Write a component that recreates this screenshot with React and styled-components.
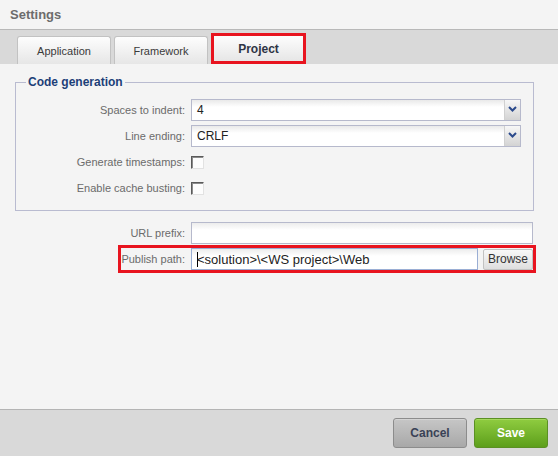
import React from "react";
import styled, { createGlobalStyle } from "styled-components";

const Global = createGlobalStyle`
  html, body { margin: 0; padding: 0; background: #f4f4f4; }
  * { box-sizing: border-box; }
`;

const Window = styled.div`
  width: 558px;
  height: 456px;
  display: flex;
  flex-direction: column;
  font-family: "Liberation Sans", Arial, sans-serif;
  background: #f4f4f4;
  overflow: hidden;
`;

const Header = styled.div`
  height: 30px;
  flex: none;
  display: flex;
  align-items: center;
  padding: 0 0 1px 10px;
  border-bottom: 1px solid #b8b8b8;
  font-size: 13px;
  font-weight: bold;
  color: #6c6c6c;
`;

const TabStrip = styled.div`
  height: 34px;
  flex: none;
  display: flex;
  align-items: flex-end;
  gap: 3px;
  padding-left: 17px;
  background: #d9d9d9;
`;

const Tab = styled.div`
  width: ${(p) => (p.$active ? 95 : 94)}px;
  height: ${(p) => (p.$active ? 31 : 28)}px;
  display: flex;
  align-items: center;
  justify-content: center;
  border: ${(p) => (p.$active ? "3px solid #e8141f" : "1px solid #c2c2c2")};
  border-bottom: ${(p) => (p.$active ? "3px solid #e8141f" : "none")};
  border-radius: ${(p) => (p.$active ? "0" : "3px 3px 0 0")};
  background: linear-gradient(#fdfdfd, #e6e6e6);
  font-size: ${(p) => (p.$active ? 12 : 11)}px;
  font-weight: ${(p) => (p.$active ? "bold" : "normal")};
  color: ${(p) => (p.$active ? "#2e3444" : "#3a3a3a")};
  padding-top: ${(p) => (p.$active ? 0 : 1)}px;
`;

const Body = styled.div`
  flex: 1;
  display: flex;
  flex-direction: column;
  padding: 11px 25px 0 15px;
  background: #f4f4f4;
`;

const Group = styled.fieldset`
  margin: 0;
  padding: 10px 12px 11px 0;
  border: 1px solid #b9bbd0;
  display: flex;
  flex-direction: column;
  gap: 4px;
`;

const Legend = styled.legend`
  margin-left: 10px;
  padding: 0 2px;
  font-size: 12px;
  line-height: 14px;
  font-weight: bold;
  color: #1d3f78;
`;

const FieldRow = styled.div`
  height: 22px;
  display: flex;
  align-items: center;
  gap: 6px;
`;

const FieldLabel = styled.label`
  width: 169px;
  flex: none;
  text-align: right;
  font-size: 11px;
  color: #6b6b6b;
`;

const Label = styled.label`
  font-size: 11px;
  color: #6b6b6b;
  white-space: nowrap;
`;

const SelectBox = styled.div`
  width: 330px;
  height: 22px;
  display: flex;
  border: 1px solid #b6b9cc;
  background: linear-gradient(#e9e9e9 0, #ffffff 7px);
`;

const SelectValue = styled.div`
  flex: 1;
  display: flex;
  align-items: center;
  padding-left: 5px;
  font-size: 12px;
  color: #222;
`;

const SelectArrow = styled.div`
  width: 16px;
  flex: none;
  display: flex;
  align-items: center;
  justify-content: center;
  padding-bottom: 3px;
  border-left: 1px solid #d0d0d0;
  background: linear-gradient(#f7f7f7, #d3d3d3);
`;

const Check = styled.div`
  width: 13px;
  height: 13px;
  border: 1px solid;
  border-color: #5a5a5a #e2e2e2 #e2e2e2 #5a5a5a;
  box-shadow: inset 1px 1px 0 #8c8c8c;
  background: #fdfdfd;
`;

const Row = styled.div`
  height: 22px;
  display: flex;
  justify-content: flex-end;
  align-items: center;
  gap: 6px;
  margin-top: ${(p) => p.$top}px;
`;

const Highlight = styled.div`
  display: flex;
  align-items: center;
  height: 22px;
  outline: 3px solid #e8141f;
`;

const TextBox = styled.div`
  width: ${(p) => p.$w}px;
  height: 22px;
  display: flex;
  align-items: center;
  padding-left: 5px;
  border: 1px solid ${(p) => (p.$focus ? "#9aaed4" : "#b6b9cc")};
  background: linear-gradient(#ececec 0, #ffffff 7px);
  font-size: 13px;
  color: #222;
  white-space: nowrap;
  margin-left: ${(p) => p.$ml || 0}px;
`;

const Caret = styled.span`
  display: inline-block;
  width: 1px;
  height: 15px;
  background: #000;
  margin-right: -1px;
`;

const BrowseButton = styled.button`
  width: 50px;
  height: 21px;
  margin-left: 5px;
  padding: 0;
  border: 1px solid #c2c2c2;
  border-radius: 2px;
  background: linear-gradient(#f8f8f8, #dedede);
  font-family: "Liberation Sans", Arial, sans-serif;
  font-size: 12px;
  color: #333;
`;

const Footer = styled.div`
  height: 47px;
  flex: none;
  display: flex;
  justify-content: flex-end;
  align-items: center;
  gap: 7px;
  padding: 0 10px 1px 0;
  border-top: 1px solid #b4b4b4;
  background: #d9d9d9;
`;

const ActionButton = styled.button`
  width: 74px;
  height: 30px;
  padding: 0;
  border-radius: 3px;
  font-family: "Liberation Sans", Arial, sans-serif;
  font-size: 12px;
  font-weight: bold;
  border: 1px solid ${(p) => (p.$primary ? "#5b9024" : "#8c8c8c")};
  background: ${(p) =>
    p.$primary
      ? "linear-gradient(#8fcc40, #5d9f1b)"
      : "linear-gradient(#c6c6c6, #a8a8a8)"};
  color: ${(p) => (p.$primary ? "#ffffff" : "#3a4256")};
  box-shadow: inset 0 1px 0 ${(p) => (p.$primary ? "#a6d85e" : "#d4d4d4")};
`;

const Chevron = () => (
  <svg width="9" height="6" viewBox="0 0 9 6">
    <path d="M1 1 L4.5 4.5 L8 1" fill="none" stroke="#2b4a8c" strokeWidth="2" />
  </svg>
);

const Select = ({ value }) => (
  <SelectBox>
    <SelectValue>{value}</SelectValue>
    <SelectArrow>
      <Chevron />
    </SelectArrow>
  </SelectBox>
);

export default function App() {
  return (
    <Window>
      <Global />
      <Header>Settings</Header>
      <TabStrip>
        <Tab>Application</Tab>
        <Tab>Framework</Tab>
        <Tab $active>Project</Tab>
      </TabStrip>
      <Body>
        <Group>
          <Legend>Code generation</Legend>
          <FieldRow>
            <FieldLabel>Spaces to indent:</FieldLabel>
            <Select value="4" />
          </FieldRow>
          <FieldRow>
            <FieldLabel>Line ending:</FieldLabel>
            <Select value="CRLF" />
          </FieldRow>
          <FieldRow>
            <FieldLabel>Generate timestamps:</FieldLabel>
            <Check />
          </FieldRow>
          <FieldRow>
            <FieldLabel>Enable cache busting:</FieldLabel>
            <Check />
          </FieldRow>
        </Group>
        <Row $top={11}>
          <Label>URL prefix:</Label>
          <TextBox $w={342} />
        </Row>
        <Row $top={4}>
          <Highlight>
            <Label>Publish path:</Label>
            <TextBox $w={287} $ml={6} $focus>
              <Caret />
              &lt;solution&gt;\&lt;WS project&gt;\Web
            </TextBox>
            <BrowseButton>Browse</BrowseButton>
          </Highlight>
        </Row>
      </Body>
      <Footer>
        <ActionButton>Cancel</ActionButton>
        <ActionButton $primary>Save</ActionButton>
      </Footer>
    </Window>
  );
}
